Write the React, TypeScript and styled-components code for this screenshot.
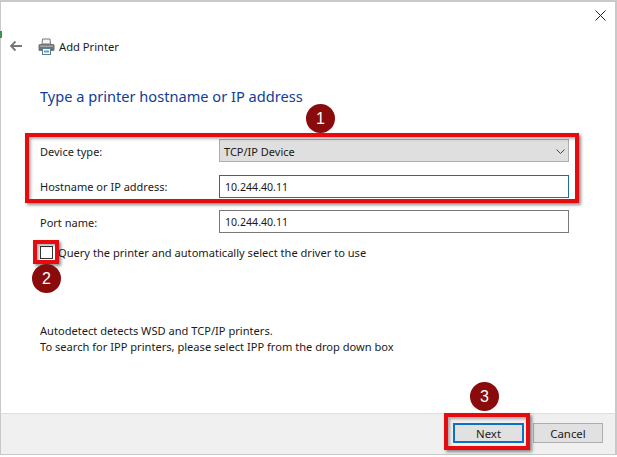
import React from "react";
import styled, { createGlobalStyle } from "styled-components";

const Global = createGlobalStyle`
  html, body { margin: 0; padding: 0; background: #fff; }
  body { font-family: "Noto Sans", "Open Sans", "Liberation Sans", sans-serif; font-size: 11px; color: #1a1a1a; overflow: hidden; }
  * { box-sizing: border-box; }
`;

const Page = styled.div`
  position: relative;
  width: 617px;
  height: 457px;
  background: #fff;
  overflow: hidden;
`;

const Frame = styled.div`
  position: relative;
  width: 617px;
  height: 455px;
  display: flex;
  flex-direction: column;
  border: solid #c9c9c9;
  border-width: 2px 2px 1px 1px;
  &::before {
    content: "";
    position: absolute;
    left: -1px;
    top: 29px;
    width: 2px;
    height: 7px;
    background: #3f8f4f;
  }
`;

const TopBar = styled.div`
  height: 34px;
  display: flex;
  justify-content: flex-end;
  padding: 8px 9px 0 0;
  flex: none;
`;

const CloseIcon = styled.svg`
  width: 11px;
  height: 11px;
  display: block;
`;

const NavRow = styled.div`
  height: 20px;
  display: flex;
  align-items: center;
  padding-left: 8px;
  flex: none;
`;

const BackIcon = styled.svg`
  width: 14px;
  height: 12px;
  margin-right: 15px;
`;

const PrinterIcon = styled.svg`
  width: 17px;
  height: 17px;
  margin-right: 4px;
`;

const NavTitle = styled.span`
  font-size: 11.2px;
  color: #1a1a1a;
`;

const Main = styled.div`
  flex: 1;
  padding: 30px 0 0 39px;
  display: flex;
  flex-direction: column;
`;

const Heading = styled.h1`
  margin: 0;
  font-size: 14.6px;
  font-weight: 400;
  line-height: 20px;
  color: #0f3d97;
`;

const Form = styled.div`
  margin-top: 33px;
  display: grid;
  grid-template-columns: 179px 350px;
  grid-auto-rows: 23px;
  row-gap: 12.5px;
  align-items: center;
`;

const Label = styled.label`
  font-size: 11px;
  color: #1a1a1a;
  padding-top: 1px;
`;

const SelectBox = styled.div`
  height: 23px;
  background: #dfdfdf;
  border: 1px solid #adadad;
  display: flex;
  align-items: center;
  justify-content: space-between;
  padding: 1px 3px 0 4px;
  font-size: 11px;
`;

const Chevron = styled.svg`
  width: 9px;
  height: 5px;
`;

const TextField = styled.div<{ $focused?: boolean }>`
  height: 23px;
  background: #fff;
  border: 1px solid ${(p) => (p.$focused ? "#1c6ea8" : "#7a7a7a")};
  display: flex;
  align-items: center;
  padding: 1px 5px 0;
  font-size: 10.6px;
`;

const CheckRow = styled.div`
  margin-top: 13px;
  height: 13px;
  display: flex;
  align-items: center;
  gap: 5px;
`;

const CheckBox = styled.span`
  width: 13px;
  height: 13px;
  background: #fff;
  border: 1px solid #333;
  flex: none;
`;

const CheckLabel = styled.label`
  font-size: 11.1px;
  color: #1a1a1a;
`;

const HelpText = styled.p`
  margin: 64px 0 0;
  font-size: 11.1px;
  line-height: 16px;
  color: #1a1a1a;
`;

const Footer = styled.div`
  height: 41px;
  flex: none;
  background: #f0f0f0;
  border-top: 1px solid #dfdfdf;
  display: flex;
  justify-content: flex-end;
  align-items: flex-start;
  gap: 9px;
  padding: 9px 12px 0 0;
`;

const Button = styled.button<{ $primary?: boolean }>`
  width: ${(p) => (p.$primary ? 71 : 70)}px;
  height: 20px;
  padding: 0;
  font: inherit;
  font-size: 11.4px;
  color: #1a1a1a;
  background: #e1e1e1;
  border: ${(p) => (p.$primary ? "2px solid #0f6fc0" : "1px solid #adadad")};
`;

const Callout = styled.div<{ $x: number; $y: number; $w: number; $h: number }>`
  position: absolute;
  left: ${(p) => p.$x}px;
  top: ${(p) => p.$y}px;
  width: ${(p) => p.$w}px;
  height: ${(p) => p.$h}px;
  border: 4px solid #e60b0f;
  box-shadow: 2px 2px 3px rgba(0, 0, 0, 0.45), inset 2px 2px 3px rgba(0, 0, 0, 0.3);
`;

const Badge = styled.div<{ $x: number; $y: number }>`
  position: absolute;
  left: ${(p) => p.$x}px;
  top: ${(p) => p.$y}px;
  width: 29px;
  height: 29px;
  border-radius: 50%;
  background: #8a0b0b;
  color: #fff;
  display: flex;
  align-items: center;
  justify-content: center;
  font-family: "Liberation Sans", sans-serif;
  font-size: 16px;
`;

export default function App() {
  return (
    <Page>
      <Global />
      <Frame>
        <TopBar>
          <CloseIcon viewBox="0 0 11 11">
            <path d="M0.5 0.5 L10.5 10.5 M10.5 0.5 L0.5 10.5" stroke="#222" strokeWidth="1" fill="none" />
          </CloseIcon>
        </TopBar>
        <NavRow>
          <BackIcon viewBox="0 0 14 12">
            <path d="M13 6 H2 M6.5 1.5 L2 6 L6.5 10.5" stroke="#777" strokeWidth="1.8" fill="none" />
          </BackIcon>
          <PrinterIcon viewBox="0 0 17 17">
            <path d="M4.5 1 H12 L12.5 6 H4 Z" fill="#f4f4f4" stroke="#777" />
            <rect x="0.5" y="6" width="16" height="7" rx="1.5" fill="#6f7377" />
            <rect x="2" y="7.5" width="13" height="1.5" fill="#a4a7aa" />
            <rect x="4.5" y="10.5" width="8" height="6" fill="#fff" stroke="#5a7f93" />
            <rect x="6" y="12.5" width="5" height="2" fill="#5fa3c0" />
          </PrinterIcon>
          <NavTitle>Add Printer</NavTitle>
        </NavRow>
        <Main>
          <Heading>Type a printer hostname or IP address</Heading>
          <Form>
            <Label>Device type:</Label>
            <SelectBox>
              TCP/IP Device
              <Chevron viewBox="0 0 9 5">
                <path d="M0.5 0.5 L4.5 4.5 L8.5 0.5" stroke="#444" strokeWidth="1" fill="none" />
              </Chevron>
            </SelectBox>
            <Label>Hostname or IP address:</Label>
            <TextField $focused>10.244.40.11</TextField>
            <Label>Port name:</Label>
            <TextField>10.244.40.11</TextField>
          </Form>
          <CheckRow>
            <CheckBox />
            <CheckLabel>Query the printer and automatically select the driver to use</CheckLabel>
          </CheckRow>
          <HelpText>
            Autodetect detects WSD and TCP/IP printers.
            <br />
            To search for IPP printers, please select IPP from the drop down box
          </HelpText>
        </Main>
        <Footer>
          <Button $primary>Next</Button>
          <Button>Cancel</Button>
        </Footer>
      </Frame>
      <Callout $x={25} $y={133} $w={554} $h={70} />
      <Callout $x={33} $y={240} $w={26} $h={24} />
      <Callout $x={444} $y={413} $w={86} $h={37} />
      <Badge $x={306} $y={104}>1</Badge>
      <Badge $x={32} $y={264}>2</Badge>
      <Badge $x={470} $y={382}>3</Badge>
    </Page>
  );
}
